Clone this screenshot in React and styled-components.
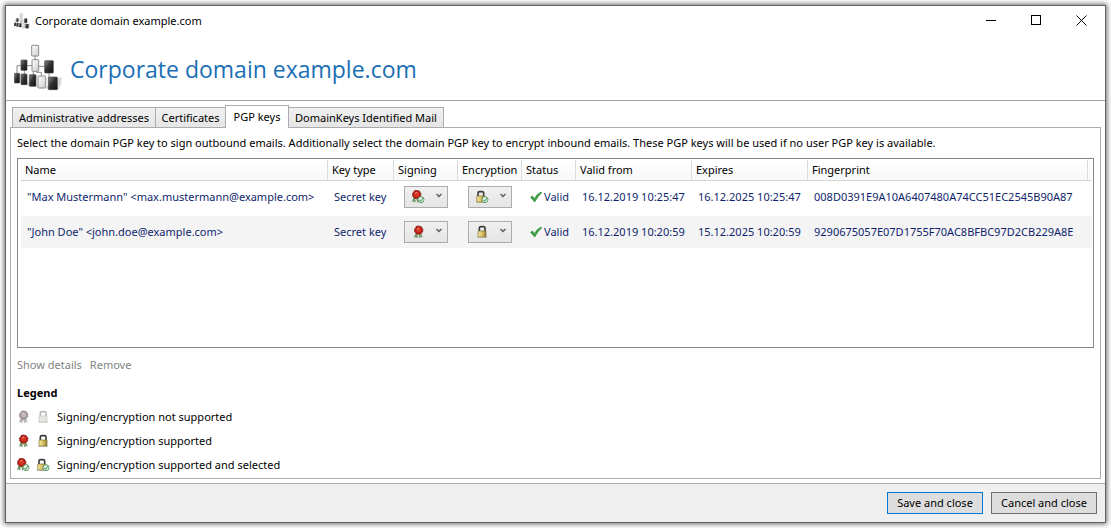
import React from 'react';
import styled, { createGlobalStyle } from 'styled-components';

const GlobalStyle = createGlobalStyle`
  * {
    box-sizing: border-box;
  }

  html,
  body,
  #root {
    height: 100%;
    margin: 0;
  }

  body {
    background: #fff;
    color: #000;
    font-family: 'Noto Sans', 'Open Sans', sans-serif;
    font-size: 11px;
    line-height: 16px;
  }

  button,
  select {
    font: inherit;
  }
`;

const Desktop = styled.div`
  display: flex;
  min-height: 100%;
  padding: 5px;
`;

const Window = styled.main`
  flex: 1;
  min-width: 0;
  display: flex;
  flex-direction: column;
  background: #fff;
  border: 1px solid #636363;
  box-shadow: 0 0 5px 1px rgba(0, 0, 0, 0.6);
`;

const TitleBar = styled.div`
  display: flex;
  align-items: center;
  height: 30px;
  padding: 0 1px 0 8px;
`;

const TitleText = styled.span`
  flex: 1;
  padding-left: 5px;
`;

const WindowButton = styled.button`
  display: flex;
  align-items: center;
  justify-content: center;
  width: 45px;
  height: 30px;
  padding: 0 0 2px;
  border: none;
  background: transparent;
`;

const Header = styled.header`
  display: flex;
  align-items: center;
  height: 65px;
  padding-left: 8px;
  border-bottom: 1px solid #a0a5aa;
`;

const Heading = styled.h1`
  margin: 0;
  padding: 2px 0 0 8px;
  color: #1b6fb5;
  font-family: 'Open Sans', 'Noto Sans', sans-serif;
  font-size: 23px;
  font-weight: 400;
  line-height: 32px;
`;

const Content = styled.div`
  flex: 1;
  display: flex;
  flex-direction: column;
  padding: 4px;
`;

const TabList = styled.div`
  display: flex;
  align-items: flex-end;
  height: 22px;
  padding-left: 2px;
`;

const Tab = styled.button`
  height: ${(props) => (props.$active ? '23px' : '20px')};
  width: ${(props) => props.$width};
  padding: 0;
  margin-left: ${(props) => (props.$active ? '-1px' : '0')};
  margin-bottom: ${(props) => (props.$active ? '-1px' : '0')};
  border: 1px solid #acacac;
  border-bottom: none;
  border-left-width: ${(props) => (props.$joined ? '0' : '1px')};
  background: ${(props) => (props.$active ? '#fff' : 'linear-gradient(#f0f0f0, #e5e5e5)')};
  color: #000;
  white-space: nowrap;
  z-index: ${(props) => (props.$active ? 1 : 0)};
`;

const Panel = styled.section`
  flex: 1;
  padding: 7px 6px 0;
  border: 1px solid #acacac;
`;

const Intro = styled.p`
  margin: 0 0 7px;
`;

const ListBox = styled.div`
  height: 190px;
  padding: 1px 1px 1px 3px;
  border: 1px solid #828790;
  overflow: hidden;
`;

const KeyTable = styled.table`
  width: 100%;
  table-layout: fixed;
  border-collapse: separate;
  border-spacing: 0;
  white-space: nowrap;
`;

const HeadCell = styled.th`
  height: 21px;
  padding: 0 0 0 4px;
  border-right: 1px solid ${(props) => (props.$last ? 'transparent' : '#dcdcdc')};
  border-bottom: 1px solid #d5d5d5;
  background: linear-gradient(#fff, #f7f8f9);
  background-clip: padding-box;
  font-weight: 400;
  text-align: left;
`;

const Row = styled.tr`
  color: #0f1f6e;

  td {
    height: 35px;
    padding: 0 0 0 6px;
    border-bottom: 3px solid transparent;
    background: ${(props) => (props.$shaded ? '#f4f4f4' : '#fff')};
    background-clip: padding-box;
  }

  td:first-child {
    border-radius: 2px 0 0 2px;
  }
`;

const Status = styled.div`
  display: flex;
  align-items: center;
  gap: 2px;
  padding-left: 2px;
`;

const Combo = styled.div`
  display: grid;
  width: 44px;
  height: 22px;
  margin-left: 4px;

  > * {
    grid-area: 1 / 1;
  }
`;

const ComboSelect = styled.select`
  appearance: none;
  width: 44px;
  height: 22px;
  padding: 0 18px 0 8px;
  border: 1px solid #acacac;
  border-radius: 0;
  background: linear-gradient(#f0f0f0, #e5e5e5);
  color: transparent;

  option {
    color: #000;
  }
`;

const ComboFace = styled.div`
  display: flex;
  align-items: center;
  justify-content: space-between;
  padding: 0 5px 0 8px;
  pointer-events: none;
  z-index: 1;
`;

const Actions = styled.div`
  display: flex;
  gap: 8px;
  padding: 9px 0 12px;
`;

const TextButton = styled.button`
  padding: 0;
  border: none;
  background: none;
  color: #838383;
`;

const LegendTitle = styled.h2`
  margin: 0 0 4px;
  font-size: 11px;
  font-weight: 700;
  line-height: 16px;
`;

const LegendRow = styled.div`
  display: flex;
  align-items: center;
  gap: 6px;
  height: 24px;
`;

const Footer = styled.footer`
  display: flex;
  align-items: center;
  justify-content: flex-end;
  gap: 8px;
  height: 39px;
  padding-right: 8px;
  border-top: 1px solid #acacac;
  background: #efefef;
`;

const PushButton = styled.button`
  width: ${(props) => props.$width};
  height: 22px;
  padding: 0;
  border: 1px solid ${(props) => (props.$primary ? '#0078d7' : '#707070')};
  background: #ddd;
  color: #000;
  white-space: nowrap;
`;

const boxes = [
  { x: 71, y: 25, w: 21, h: 32, light: true },
  { x: 39, y: 69, w: 18, h: 31 },
  { x: 72, y: 68, w: 20, h: 35, light: true },
  { x: 110, y: 71, w: 26, h: 37 },
  { x: 19, y: 109, w: 16, h: 29 },
  { x: 39, y: 111, w: 18, h: 32 },
  { x: 64, y: 113, w: 20, h: 35 },
  { x: 90, y: 117, w: 23, h: 36, light: true },
  { x: 121, y: 120, w: 27, h: 38 },
];

const OrgIcon = ({ size }) => (
  <svg width={size} height={size} viewBox="18 21 144 144" aria-hidden="true">
    <defs>
      <linearGradient id="orgDark" x1="0" y1="0" x2="1" y2="1">
        <stop offset="0" stopColor="#8a8a8a" />
        <stop offset="0.45" stopColor="#333" />
        <stop offset="1" stopColor="#111" />
      </linearGradient>
      <linearGradient id="orgLight" x1="0" y1="0" x2="1" y2="1">
        <stop offset="0" stopColor="#fff" />
        <stop offset="1" stopColor="#ccc" />
      </linearGradient>
    </defs>
    <path d="M50 143l12-8 4 13zM84 148l8-6 0 12zM113 151l10-8v16zM146 158l2-34 13-4-2 22-8 16z" fill="#d9d9d9" />
    <path d="M81 56v14M57 86h15M92 88h18M39 86H27v24M49 99v12M76 102v12M123 106v15M100 118v-12H84" fill="none" stroke="#8a8a8a" strokeWidth="3" />
    {boxes.map((box) => (
      <rect
        key={`${box.x}-${box.y}`}
        x={box.x}
        y={box.y}
        width={box.w}
        height={box.h}
        rx="2"
        fill={box.light ? 'url(#orgLight)' : 'url(#orgDark)'}
        stroke={box.light ? '#8c8c8c' : '#444'}
        strokeWidth={box.light ? 3 : 2}
      />
    ))}
  </svg>
);

const SelectedBadge = () => (
  <g>
    <circle cx="27" cy="29" r="9" fill="#eef8ef" stroke="#5d9c6c" strokeWidth="3" />
    <path d="M22 29l4 5 7-10" fill="none" stroke="#2f8a45" strokeWidth="3" />
  </g>
);

const SealIcon = ({ state }) => {
  const muted = state === 'none';
  const selected = state === 'selected';
  return (
    <svg width="14" height="14" viewBox="0 0 42 42" aria-hidden="true">
      <g transform={selected ? 'translate(-7 -1)' : 'translate(-1 1)'}>
        <path
          d="M13 22l-5 14 5-2 3 4 4-13 4 13 3-4 5 1-6-14z"
          fill={muted ? '#b5b5b5' : '#6e9a68'}
          stroke={muted ? '#999' : '#3f6b3d'}
          strokeWidth="1"
        />
        <path d="M16 24h9l2 11-6-10-5 9z" fill={muted ? '#ddd' : '#d9e8d2'} />
        <path
          d="M20 2l5 1 4 1 2 4 3 4-1 4 0 4-4 3-3 4-5-1-5 1-3-4-4-3 0-5-1-4 4-3 2-5z"
          fill={muted ? '#a89c9c' : '#b81f12'}
          stroke={muted ? '#857b7b' : '#7b1710'}
          strokeWidth="2"
        />
        <circle cx="21" cy="14" r="7" fill={muted ? '#c5b9b9' : '#d93a28'} />
        <path d="M16 12q2-5 7-4" fill="none" stroke={muted ? '#ddd3d3' : '#f59080'} strokeWidth="3" />
      </g>
      {selected && <SelectedBadge />}
    </svg>
  );
};

const LockIcon = ({ state }) => {
  const muted = state === 'none';
  const selected = state === 'selected';
  return (
    <svg width="14" height="14" viewBox="0 0 42 42" aria-hidden="true">
      <defs>
        <linearGradient id="lockGold">
          <stop offset="0" stopColor="#fff3ad" />
          <stop offset="0.5" stopColor="#e2cb6b" />
          <stop offset="1" stopColor="#8f7a2c" />
        </linearGradient>
      </defs>
      <g transform={selected ? 'translate(-6 0)' : 'translate(-2 0)'}>
        <path d="M5 37h31" stroke={muted ? '#ddd' : '#c4c4c4'} strokeWidth="3" />
        <path
          d="M12 20V9q0-4 5-4h7q5 0 5 4v11"
          fill="none"
          stroke={muted ? '#b9b9b9' : '#3d3d3d'}
          strokeWidth="5"
        />
        <rect
          x="8"
          y="18"
          width="24"
          height="18"
          rx="1"
          fill={muted ? '#e9e9e5' : 'url(#lockGold)'}
          stroke={muted ? '#bdbdbd' : '#77682f'}
          strokeWidth="2"
        />
        <path d="M11 24h18M11 30h18" stroke={muted ? '#d9d9d4' : '#b9a24a'} strokeWidth="1" />
      </g>
      {selected && <SelectedBadge />}
    </svg>
  );
};

const CheckIcon = () => (
  <svg width="12" height="12" viewBox="0 0 36 36" aria-hidden="true">
    <path d="M2 19l5-4 6 8Q21 9 33 3l2 2Q23 16 14 33z" fill="#3faa45" stroke="#237f2c" strokeWidth="2" />
  </svg>
);

const ChevronIcon = () => (
  <svg width="8" height="12" viewBox="0 0 8 12" aria-hidden="true">
    <path d="M1.5 3L4 5.500 6.500 3" fill="none" stroke="#606060" strokeWidth="1.500" />
  </svg>
);

const stateLabels = {
  none: 'Not supported',
  supported: 'Supported',
  selected: 'Selected',
};

const KeyCombo = ({ label, state, icon: Icon }) => (
  <Combo>
    <ComboSelect aria-label={label} defaultValue={state}>
      <option value="supported">{stateLabels.supported}</option>
      <option value="selected">{stateLabels.selected}</option>
    </ComboSelect>
    <ComboFace>
      <Icon state={state} />
      <ChevronIcon />
    </ComboFace>
  </Combo>
);

const tabs = [
  { name: 'Administrative addresses', width: '144px' },
  { name: 'Certificates', width: '70px', joined: true },
  { name: 'PGP keys', width: '64px', active: true },
  { name: 'DomainKeys Identified Mail', width: '155px', joined: true },
];

const columns = ['Name', 'Key type', 'Signing', 'Encryption', 'Status', 'Valid from', 'Expires', 'Fingerprint'];

const keys = [
  {
    name: '"Max Mustermann" <max.mustermann@example.com>',
    state: 'selected',
    from: '16.12.2019 10:25:47',
    expires: '16.12.2025 10:25:47',
    fingerprint: '008D0391E9A10A6407480A74CC51EC2545B90A87',
  },
  {
    name: '"John Doe" <john.doe@example.com>',
    state: 'supported',
    from: '16.12.2019 10:20:59',
    expires: '15.12.2025 10:20:59',
    fingerprint: '9290675057E07D1755F70AC8BFBC97D2CB229A8E',
  },
];

const legend = [
  { state: 'none', text: 'Signing/encryption not supported' },
  { state: 'supported', text: 'Signing/encryption supported' },
  { state: 'selected', text: 'Signing/encryption supported and selected' },
];

const App = () => {
  return (
    <>
      <GlobalStyle />
      <Desktop>
        <Window>
          <TitleBar>
            <OrgIcon size={16} />
            <TitleText>Corporate domain example.com</TitleText>
            <WindowButton aria-label="Minimize">
              <svg width="11" height="11" shapeRendering="crispEdges">
                <path d="M0 5.5h10" stroke="#000" />
              </svg>
            </WindowButton>
            <WindowButton aria-label="Maximize">
              <svg width="11" height="11" shapeRendering="crispEdges">
                <rect x="0.5" y="0.5" width="9" height="9" fill="none" stroke="#000" />
              </svg>
            </WindowButton>
            <WindowButton aria-label="Close">
              <svg width="11" height="11">
                <path d="M0.5 0.5l10 10M10.5 0.5l-10 10" stroke="#000" />
              </svg>
            </WindowButton>
          </TitleBar>
          <Header>
            <OrgIcon size={48} />
            <Heading>Corporate domain example.com</Heading>
          </Header>
          <Content>
            <TabList role="tablist">
              {tabs.map((tab) => (
                <Tab
                  key={tab.name}
                  role="tab"
                  aria-selected={Boolean(tab.active)}
                  $active={tab.active}
                  $joined={tab.joined}
                  $width={tab.width}
                >
                  {tab.name}
                </Tab>
              ))}
            </TabList>
            <Panel>
              <Intro>
                Select the domain PGP key to sign outbound emails. Additionally select the domain PGP key to encrypt
                inbound emails. These PGP keys will be used if no user PGP key is available.
              </Intro>
              <ListBox>
                <KeyTable>
                  <colgroup>
                    <col />
                    <col width="66" />
                    <col width="64" />
                    <col width="64" />
                    <col width="54" />
                    <col width="116" />
                    <col width="116" />
                    <col width="280" />
                    <col width="4" />
                  </colgroup>
                  <thead>
                    <tr>
                      {columns.map((column) => (
                        <HeadCell key={column} scope="col">
                          {column}
                        </HeadCell>
                      ))}
                      <HeadCell as="td" $last />
                    </tr>
                  </thead>
                  <tbody>
                    {keys.map((key, index) => (
                      <Row key={key.fingerprint} $shaded={index % 2 === 1}>
                        <td>{key.name}</td>
                        <td>Secret key</td>
                        <td>
                          <KeyCombo label="Signing" state={key.state} icon={SealIcon} />
                        </td>
                        <td>
                          <KeyCombo label="Encryption" state={key.state} icon={LockIcon} />
                        </td>
                        <td>
                          <Status>
                            <CheckIcon />
                            Valid
                          </Status>
                        </td>
                        <td>{key.from}</td>
                        <td>{key.expires}</td>
                        <td colSpan={2}>{key.fingerprint}</td>
                      </Row>
                    ))}
                  </tbody>
                </KeyTable>
              </ListBox>
              <Actions>
                <TextButton disabled>Show details</TextButton>
                <TextButton disabled>Remove</TextButton>
              </Actions>
              <LegendTitle>Legend</LegendTitle>
              {legend.map((item) => (
                <LegendRow key={item.state}>
                  <SealIcon state={item.state} />
                  <LockIcon state={item.state} />
                  <span>{item.text}</span>
                </LegendRow>
              ))}
            </Panel>
          </Content>
          <Footer>
            <PushButton $primary $width="96px">
              Save and close
            </PushButton>
            <PushButton $width="106px">Cancel and close</PushButton>
          </Footer>
        </Window>
      </Desktop>
    </>
  );
};

export default App;
